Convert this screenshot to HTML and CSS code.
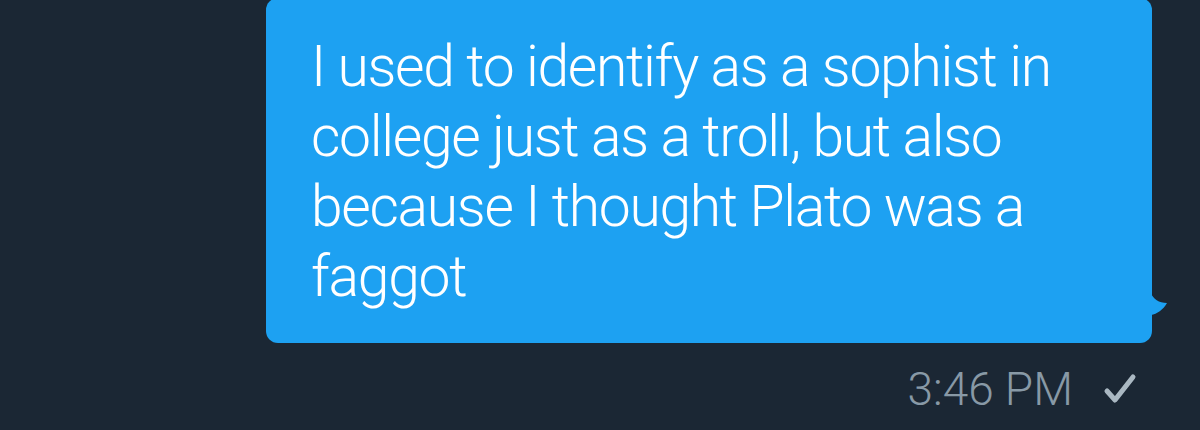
FILE: index.html
```html
<!DOCTYPE html>
<html>
<head>
<meta charset="utf-8">
<link rel="stylesheet" href="styles.css">
</head>
<body>
<div class="thread">
  <div class="bubble">
    <p class="msg">I used to identify as a sophist in college just as a troll, but also because I thought Plato was a faggot</p>
    <svg class="tail" width="18" height="24" viewBox="0 0 18 24"><path d="M0 0 C2 6 8 10 16 10 C12 17 6 21 0 22 Z" fill="#1da1f2"/></svg>
  </div>
  <div class="meta">
    <span class="time">3:46 PM</span>
    <svg class="check" width="34" height="34" viewBox="0 0 34 34"><path d="M4 19 L12 28 L30 5" fill="none" stroke="#aab8c2" stroke-width="5" stroke-linecap="round" stroke-linejoin="round"/></svg>
  </div>
</div>
</body>
</html>
```
FILE: styles.css
```css
html, body {
  margin: 0;
  padding: 0;
  background: #1b2734;
  width: 1200px;
  height: 430px;
  overflow: hidden;
}
.thread {
  display: flex;
  flex-direction: column;
  align-items: flex-end;
  padding-right: 48px;
  margin-top: -2px;
}
.bubble {
  position: relative;
  width: 886px;
  height: 345px;
  box-sizing: border-box;
  background: #1da1f2;
  border-radius: 12px;
  padding: 34px 40px 0 45px;
}
.msg {
  margin: 0;
  font-family: Roboto, "Liberation Sans", sans-serif;
  font-weight: 300;
  font-size: 57px;
  letter-spacing: -1.3px;
  line-height: 70px;
  color: #ffffff;
}
.tail {
  position: absolute;
  left: 885px;
  top: 295px;
}
.meta {
  display: flex;
  align-items: center;
  gap: 30px;
  margin-top: 19px;
  margin-right: 15px;
}
.time {
  font-family: Roboto, "Liberation Sans", sans-serif;
  font-weight: 300;
  font-size: 46px;
  line-height: 54px;
  color: #8899a6;
}
.check {
  display: block;
}
```
